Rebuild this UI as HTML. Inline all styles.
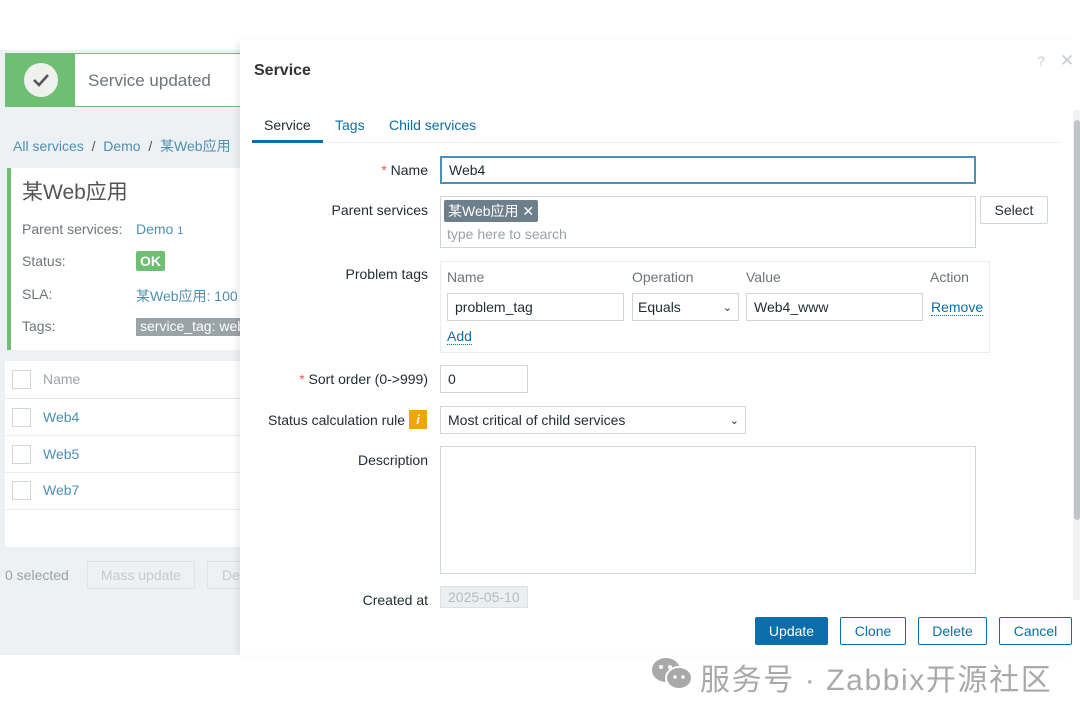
<!DOCTYPE html>
<html><head><meta charset="utf-8"><style>
*{box-sizing:border-box;margin:0;padding:0}
body{width:1080px;height:719px;background:#fff;font-family:"Liberation Sans","Noto Sans CJK SC",sans-serif;font-size:14px;color:#1f2c33;position:relative;overflow:hidden}
.a{position:absolute}
.lnk{color:#4e8fb5}
.lbl{position:absolute;text-align:right;color:#1f2c33;font-size:14px}
.inp{position:absolute;border:1px solid #cfd6da;background:#fff;font-size:14px;padding-left:7px;display:flex;align-items:center}
.btn{position:absolute;border:1px solid #0a6eaa;border-radius:2px;color:#0a6eaa;background:#fff;font-size:14px;display:flex;align-items:center;justify-content:center}
.star{color:#e45959}
</style></head><body>
<div class="a" style="left:0;top:50px;width:245px;height:605px;background:#eef1f3"></div>
<div class="a" style="left:5px;top:53px;width:240px;height:54px;border:1px solid #6fbf73;background:#fff"></div>
<div class="a" style="left:5px;top:53px;width:70px;height:54px;background:#6fbf73"></div>
<div class="a" style="left:24px;top:63px;width:34px;height:34px;border-radius:50%;background:#eef1ee;display:flex;align-items:center;justify-content:center"><svg width="18" height="14" viewBox="0 0 18 14"><path d="M2 7l5 5 9-10" stroke="#555" stroke-width="2.6" fill="none"/></svg></div>
<div class="a" style="left:88px;top:71px;font-size:17px;color:#6d7478">Service updated</div>
<div class="a lnk" style="left:13px;top:136px;font-size:14px">All services &nbsp;<span style="color:#555">/</span>&nbsp; Demo &nbsp;<span style="color:#555">/</span>&nbsp; 某Web应用</div>
<div class="a" style="left:7px;top:168px;width:238px;height:182px;background:#fff;border-left:4px solid #6fbf73"></div>
<div class="a" style="left:22px;top:176px;font-size:21px;color:#555">某Web应用</div>
<div class="a" style="left:22px;top:221px;color:#6d7478">Parent services:</div>
<div class="a lnk" style="left:136px;top:221px">Demo <span style="font-size:11px">1</span></div>
<div class="a" style="left:22px;top:253px;color:#6d7478">Status:</div>
<div class="a" style="left:136px;top:251px;background:#6fbf73;color:#fff;padding:2px 4px;border-radius:2px;font-size:14px;font-weight:bold">OK</div>
<div class="a" style="left:22px;top:286px;color:#6d7478">SLA:</div>
<div class="a lnk" style="left:136px;top:286px;white-space:nowrap">某Web应用: 100</div>
<div class="a" style="left:22px;top:318px;color:#6d7478">Tags:</div>
<div class="a" style="left:136px;top:318px;width:110px;height:18px;background:#9aa3a8;color:#fff;padding-left:4px;font-size:14px;white-space:nowrap;overflow:hidden">service_tag: web</div>
<div class="a" style="left:5px;top:361px;width:240px;height:186px;background:#fff"></div>
<div class="a" style="left:5px;top:398px;width:240px;height:1px;background:#e2e6e8"></div>
<div class="a" style="left:5px;top:435px;width:240px;height:1px;background:#e8ecee"></div>
<div class="a" style="left:5px;top:472px;width:240px;height:1px;background:#e8ecee"></div>
<div class="a" style="left:5px;top:509px;width:240px;height:1px;background:#e8ecee"></div>
<div class="a" style="left:12px;top:370px;width:19px;height:19px;border:1px solid #cfd6da"></div>
<div class="a" style="left:43px;top:371px;color:#9aa3a8">Name</div>
<div class="a" style="left:12px;top:408px;width:19px;height:19px;border:1px solid #cfd6da"></div>
<div class="a lnk" style="left:43px;top:409px">Web4</div>
<div class="a" style="left:12px;top:445px;width:19px;height:19px;border:1px solid #cfd6da"></div>
<div class="a lnk" style="left:43px;top:446px">Web5</div>
<div class="a" style="left:12px;top:481px;width:19px;height:19px;border:1px solid #cfd6da"></div>
<div class="a lnk" style="left:43px;top:482px">Web7</div>
<div class="a" style="left:5px;top:567px;color:#9aa3a8">0 selected</div>
<div class="a" style="left:87px;top:561px;width:108px;height:28px;border:1px solid #dde2e5;color:#c5cbce;display:flex;align-items:center;justify-content:center">Mass update</div>
<div class="a" style="left:207px;top:561px;width:40px;height:28px;border:1px solid #dde2e5;color:#c5cbce;padding-left:14px;line-height:26px">De</div>
<div class="a" style="left:240px;top:40px;width:840px;height:615px;background:#fff;box-shadow:-5px 0 6px -2px rgba(0,0,0,.08)"></div>
<div class="a" style="left:254px;top:62px;font-size:16px;font-weight:bold;color:#333">Service</div>
<div class="a" style="left:1037px;top:53px;color:#c8cdd0;font-size:14px">?</div>
<div class="a" style="left:1060px;top:51px;color:#c8cdd0;font-size:17px">✕</div>
<div class="a" style="left:1073px;top:110px;width:7px;height:490px;background:#f2f2f2"></div>
<div class="a" style="left:1074px;top:120px;width:6px;height:400px;background:#bfc4c7;border-radius:3px"></div>
<div class="a" style="left:264px;top:117px;color:#1f2c33">Service</div>
<div class="a lnk" style="left:335px;top:117px;color:#0a6eaa">Tags</div>
<div class="a lnk" style="left:389px;top:117px;color:#0a6eaa">Child services</div>
<div class="a" style="left:252px;top:142px;width:808px;height:1px;background:#ebeef0"></div>
<div class="a" style="left:252px;top:140px;width:71px;height:3px;background:#0a6eaa"></div>
<div class="lbl" style="left:250px;top:162px;width:178px"><span class="star">*</span> Name</div>
<div class="inp" style="left:440px;top:156px;width:536px;height:28px;border:2px solid #4e8fb5">Web4</div>
<div class="lbl" style="left:250px;top:202px;width:178px">Parent services</div>
<div class="inp" style="left:440px;top:196px;width:536px;height:52px;display:block;padding:4px 3px"></div>
<div class="a" style="left:444px;top:200px;background:#6d7f8b;color:#fff;padding:1px 4px;font-size:14px;border-radius:2px">某Web应用 ✕</div>
<div class="a" style="left:447px;top:226px;color:#9aa3a8">type here to search</div>
<div class="btn" style="left:980px;top:196px;width:68px;height:28px;border-color:#cfd6da;color:#1f2c33">Select</div>
<div class="lbl" style="left:250px;top:266px;width:178px">Problem tags</div>
<div class="a" style="left:440px;top:261px;width:550px;height:92px;border:1px solid #ebeef0"></div>
<div class="a" style="left:447px;top:269px;color:#6d7478">Name</div>
<div class="a" style="left:632px;top:269px;color:#6d7478">Operation</div>
<div class="a" style="left:746px;top:269px;color:#6d7478">Value</div>
<div class="a" style="left:930px;top:269px;color:#6d7478">Action</div>
<div class="inp" style="left:447px;top:293px;width:177px;height:28px">problem_tag</div>
<div class="inp" style="left:632px;top:293px;width:107px;height:28px;padding-left:5px">Equals<span style="position:absolute;right:6px;font-size:11px">⌄</span></div>
<div class="inp" style="left:746px;top:293px;width:177px;height:28px">Web4_www</div>
<div class="a" style="left:931px;top:299px;color:#0a6eaa;border-bottom:1px dotted #0a6eaa;line-height:16px">Remove</div>
<div class="a" style="left:447px;top:328px;color:#0a6eaa;border-bottom:1px dotted #0a6eaa;line-height:16px">Add</div>
<div class="lbl" style="left:250px;top:371px;width:178px"><span class="star">*</span> Sort order (0-&gt;999)</div>
<div class="inp" style="left:440px;top:365px;width:88px;height:28px">0</div>
<div class="lbl" style="left:250px;top:412px;width:155px">Status calculation rule</div>
<div class="a" style="left:409px;top:410px;width:18px;height:19px;background:#f0a40f;color:#fff;font-style:italic;font-weight:bold;text-align:center;font-size:13px;line-height:19px">i</div>
<div class="inp" style="left:440px;top:406px;width:306px;height:28px">Most critical of child services<span style="position:absolute;right:6px;font-size:11px">⌄</span></div>
<div class="lbl" style="left:250px;top:452px;width:178px">Description</div>
<div class="inp" style="left:440px;top:446px;width:536px;height:128px"></div>
<div class="lbl" style="left:250px;top:592px;width:178px">Created at</div>
<div class="inp" style="left:440px;top:586px;width:88px;height:22px;background:#eceff0;color:#b5bcc0;border-color:#dde2e5">2025-05-10</div>
<div class="btn" style="left:755px;top:617px;width:73px;height:28px;background:#0a6eaa;color:#fff">Update</div>
<div class="btn" style="left:840px;top:617px;width:66px;height:28px">Clone</div>
<div class="btn" style="left:918px;top:617px;width:69px;height:28px">Delete</div>
<div class="btn" style="left:999px;top:617px;width:73px;height:28px">Cancel</div>
<svg class="a" style="left:651px;top:657px" width="42" height="34" viewBox="0 0 42 34"><ellipse cx="15" cy="13" rx="14" ry="12" fill="#a9a9a9"/><ellipse cx="28" cy="21" rx="13" ry="11" fill="#a9a9a9" stroke="#fff" stroke-width="2"/><circle cx="10" cy="10" r="2" fill="#fff"/><circle cx="19" cy="10" r="2" fill="#fff"/><circle cx="24" cy="20" r="1.8" fill="#fff"/><circle cx="32" cy="20" r="1.8" fill="#fff"/></svg>
<div class="a" style="left:700px;top:655px;font-size:30px;letter-spacing:1.6px;color:#a9a9a9;white-space:nowrap">服务号 · Zabbix开源社区</div>
</body></html>
